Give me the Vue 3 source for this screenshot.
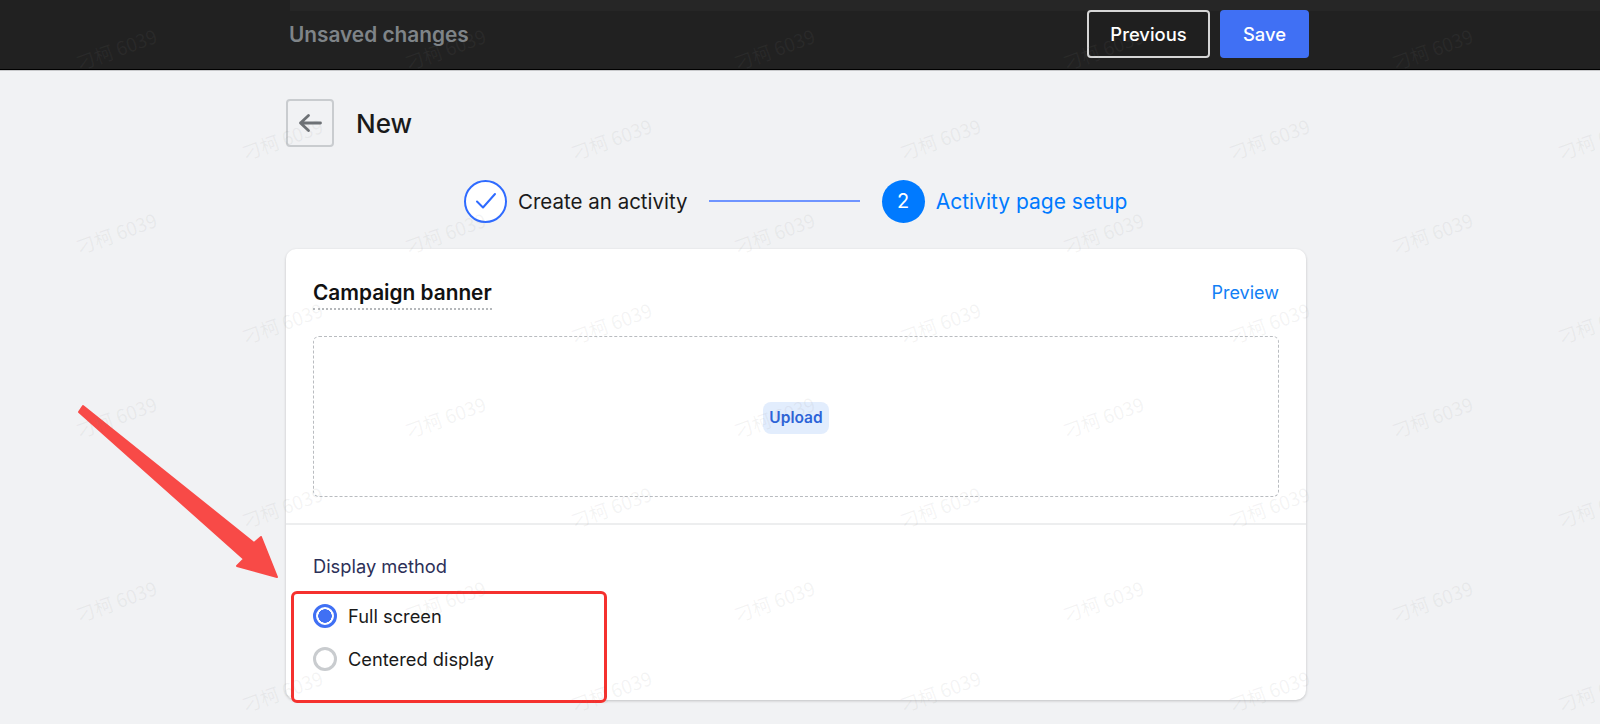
<script setup>
const marks = []
for (let r = 0; r < 4; r++) {
  for (let c = 0; c < 5; c++) {
    marks.push({ x: 74 + c * 329, y: 49 + r * 184 })
    marks.push({ x: 240 + c * 329, y: 139 + r * 184 })
  }
}
</script>

<template>
  <div class="root">
    <header class="bar">
      <div class="bar-strip"></div>
      <div class="bar-inner">
        <span class="unsaved">Unsaved changes</span>
        <div class="bar-actions">
          <button class="btn btn-outline">Previous</button>
          <button class="btn btn-primary">Save</button>
        </div>
      </div>
    </header>

    <main class="page">
      <div class="title-row">
        <button class="back" aria-label="Back">
          <svg width="24" height="24" viewBox="0 0 24 24" fill="none" stroke="#6d7175" stroke-width="2.8" stroke-linecap="round" stroke-linejoin="round">
            <path d="M22.5 12H2.5M10.5 4.5 2.5 12l8 7.5" />
          </svg>
        </button>
        <h1 class="title">New</h1>
      </div>

      <div class="steps">
        <div class="step">
          <span class="dot dot-done">
            <svg width="22" height="18" viewBox="0 0 22 18" fill="none" stroke="#2f6bff" stroke-width="2" stroke-linecap="round" stroke-linejoin="round">
              <path d="M2 9.5 8 15.5 20 2" />
            </svg>
          </span>
          <span class="step-label">Create an activity</span>
        </div>
        <span class="step-line"></span>
        <div class="step">
          <span class="dot dot-active">2</span>
          <span class="step-label step-label-active">Activity page setup</span>
        </div>
      </div>

      <section class="card">
        <div class="card-top">
          <div class="card-head">
            <h2 class="card-title">Campaign banner</h2>
            <a class="preview">Preview</a>
          </div>
          <div class="dropzone">
            <span class="upload">Upload</span>
          </div>
        </div>
        <div class="card-bottom">
          <div class="field-label">Display method</div>
          <label class="radio-row">
            <span class="radio radio-on"></span>
            <span>Full screen</span>
          </label>
          <label class="radio-row">
            <span class="radio"></span>
            <span>Centered display</span>
          </label>
        </div>
      </section>
    </main>

    <div class="redbox"></div>
    <svg class="arrow" width="1600" height="724" viewBox="0 0 1600 724">
      <path d="M83 406 254 543 261 537 277 577 237 566 244 559 79 412Z" fill="#f84a47" stroke="#f84a47" stroke-width="2" stroke-linejoin="round" />
    </svg>

    <div class="marks">
      <span
        v-for="(m, i) in marks"
        :key="i"
        class="mark"
        :style="{ left: m.x + 'px', top: m.y + 'px' }"
      >刁柯 6039</span>
    </div>
  </div>
</template>

<style>
html, body { margin: 0; background: #f1f2f4; }
</style>

<style scoped>
.root {
  position: relative;
  width: 1600px;
  height: 724px;
  overflow: hidden;
  background: #f1f2f4;
  font-family: Inter, "Noto Sans", sans-serif;
  color: #202223;
}
.bar {
  height: 70px;
  box-sizing: border-box;
  background: #212121;
  border-bottom: 1px solid #000;
  box-shadow: 0 1px 0 #c8c9cb;
}
.bar-strip {
  height: 11px;
  margin-left: 290px;
  background: #262626;
}
.bar-inner {
  display: flex;
  justify-content: space-between;
  align-items: center;
  margin-top: -1px;
  padding: 0 291px 0 289px;
  height: 48px;
}
.unsaved {
  font-size: 20.8px;
  font-weight: 600;
  color: #7f8488;
}
.bar-actions { display: flex; gap: 10px; }
.btn {
  height: 48px;
  box-sizing: border-box;
  font: 500 18.4px Inter, sans-serif;
  border-radius: 4px;
  color: #fff;
  cursor: pointer;
}
.btn-outline {
  width: 123px;
  background: #1f1f1f;
  border: 2px solid #d6d6d6;
}
.btn-primary {
  width: 89px;
  background: #4070f4;
  border: 0;
}
.page { padding: 0 294px 0 286px; }
.title-row {
  display: flex;
  align-items: center;
  gap: 22px;
  margin-top: 29px;
}
.back {
  display: flex;
  align-items: center;
  justify-content: center;
  width: 48px;
  height: 48px;
  padding: 0;
  background: #f1f2f4;
  border: 2px solid #c9cccf;
  border-radius: 4px;
}
.title {
  margin: 0;
  font-size: 26px;
  line-height: 50px;
  height: 48px;
  font-weight: 500;
  color: #1a1a1a;
}
.steps {
  display: flex;
  align-items: center;
  margin-top: 32px;
  padding-left: 178px;
  height: 44px;
}
.step { display: flex; align-items: center; gap: 11px; }
.dot {
  display: flex;
  align-items: center;
  justify-content: center;
  width: 43px;
  height: 43px;
  box-sizing: border-box;
  border-radius: 50%;
  font-size: 20px;
}
.dot-done { background: #fff; border: 2px solid #2f6bff; }
.dot-active { background: #007aff; color: #fff; }
.step-label { font-size: 20.5px; color: #1a1a1a; white-space: nowrap; }
.step-label-active { color: #007aff; font-size: 21px; }
.step-line {
  width: 151px;
  height: 2px;
  margin: 0 22px 0 21px;
  background: #6f94ff;
}
.card {
  margin-top: 26px;
  width: 1020px;
  height: 451px;
  background: #fff;
  border-radius: 10px;
  box-shadow: 0 1px 3px rgba(0, 0, 0, .2);
}
.card-top {
  padding: 0 27px 26px;
  border-bottom: 2px solid #edeeef;
}
.card-head {
  display: flex;
  justify-content: space-between;
  align-items: flex-start;
  height: 87px;
  padding-top: 30px;
  box-sizing: border-box;
}
.card-title {
  margin: 0;
  font-size: 20.8px;
  line-height: 28px;
  font-weight: 600;
  color: #111;
  border-bottom: 2px dotted #b5b8bb;
  padding-bottom: 1px;
}
.preview { font-size: 18px; line-height: 27px; color: #1280f5; }
.dropzone {
  display: flex;
  align-items: center;
  justify-content: center;
  height: 161px;
  box-sizing: border-box;
  border: 1.5px dashed #b9bcc0;
  border-radius: 6px;
}
.upload {
  margin-top: 2px;
  padding: 0 6px;
  height: 32px;
  line-height: 32px;
  font-size: 15.5px;
  font-weight: 600;
  color: #2c63d8;
  background: #e2edfd;
  border-radius: 8px;
}
.card-bottom { padding: 27px 27px 0; }
.field-label {
  font-size: 18.3px;
  line-height: 28px;
  color: #2c3058;
  margin-bottom: 14px;
}
.radio-row {
  display: flex;
  align-items: center;
  gap: 11px;
  height: 43px;
  font-size: 18.3px;
  color: #1a1a1a;
}
.radio {
  width: 24px;
  height: 24px;
  box-sizing: border-box;
  border: 3px solid #c9cccf;
  border-radius: 50%;
  background: #fff;
}
.radio-on {
  border-color: #4070f4;
  background: radial-gradient(circle, #4070f4 0 6.5px, #fff 7px);
}
.redbox {
  position: absolute;
  left: 291px;
  top: 591px;
  width: 316px;
  height: 112px;
  box-sizing: border-box;
  border: 3.5px solid #f5312e;
  border-radius: 6px;
}
.arrow { position: absolute; left: 0; top: 0; pointer-events: none; }
.marks { position: absolute; inset: 0; pointer-events: none; }
.mark {
  position: absolute;
  transform: translateY(-50%) rotate(-20deg);
  font: 19px "Noto Sans CJK SC", "Noto Sans", sans-serif;
  line-height: 24px;
  color: rgba(130, 130, 130, .09);
  white-space: nowrap;
}
</style>
